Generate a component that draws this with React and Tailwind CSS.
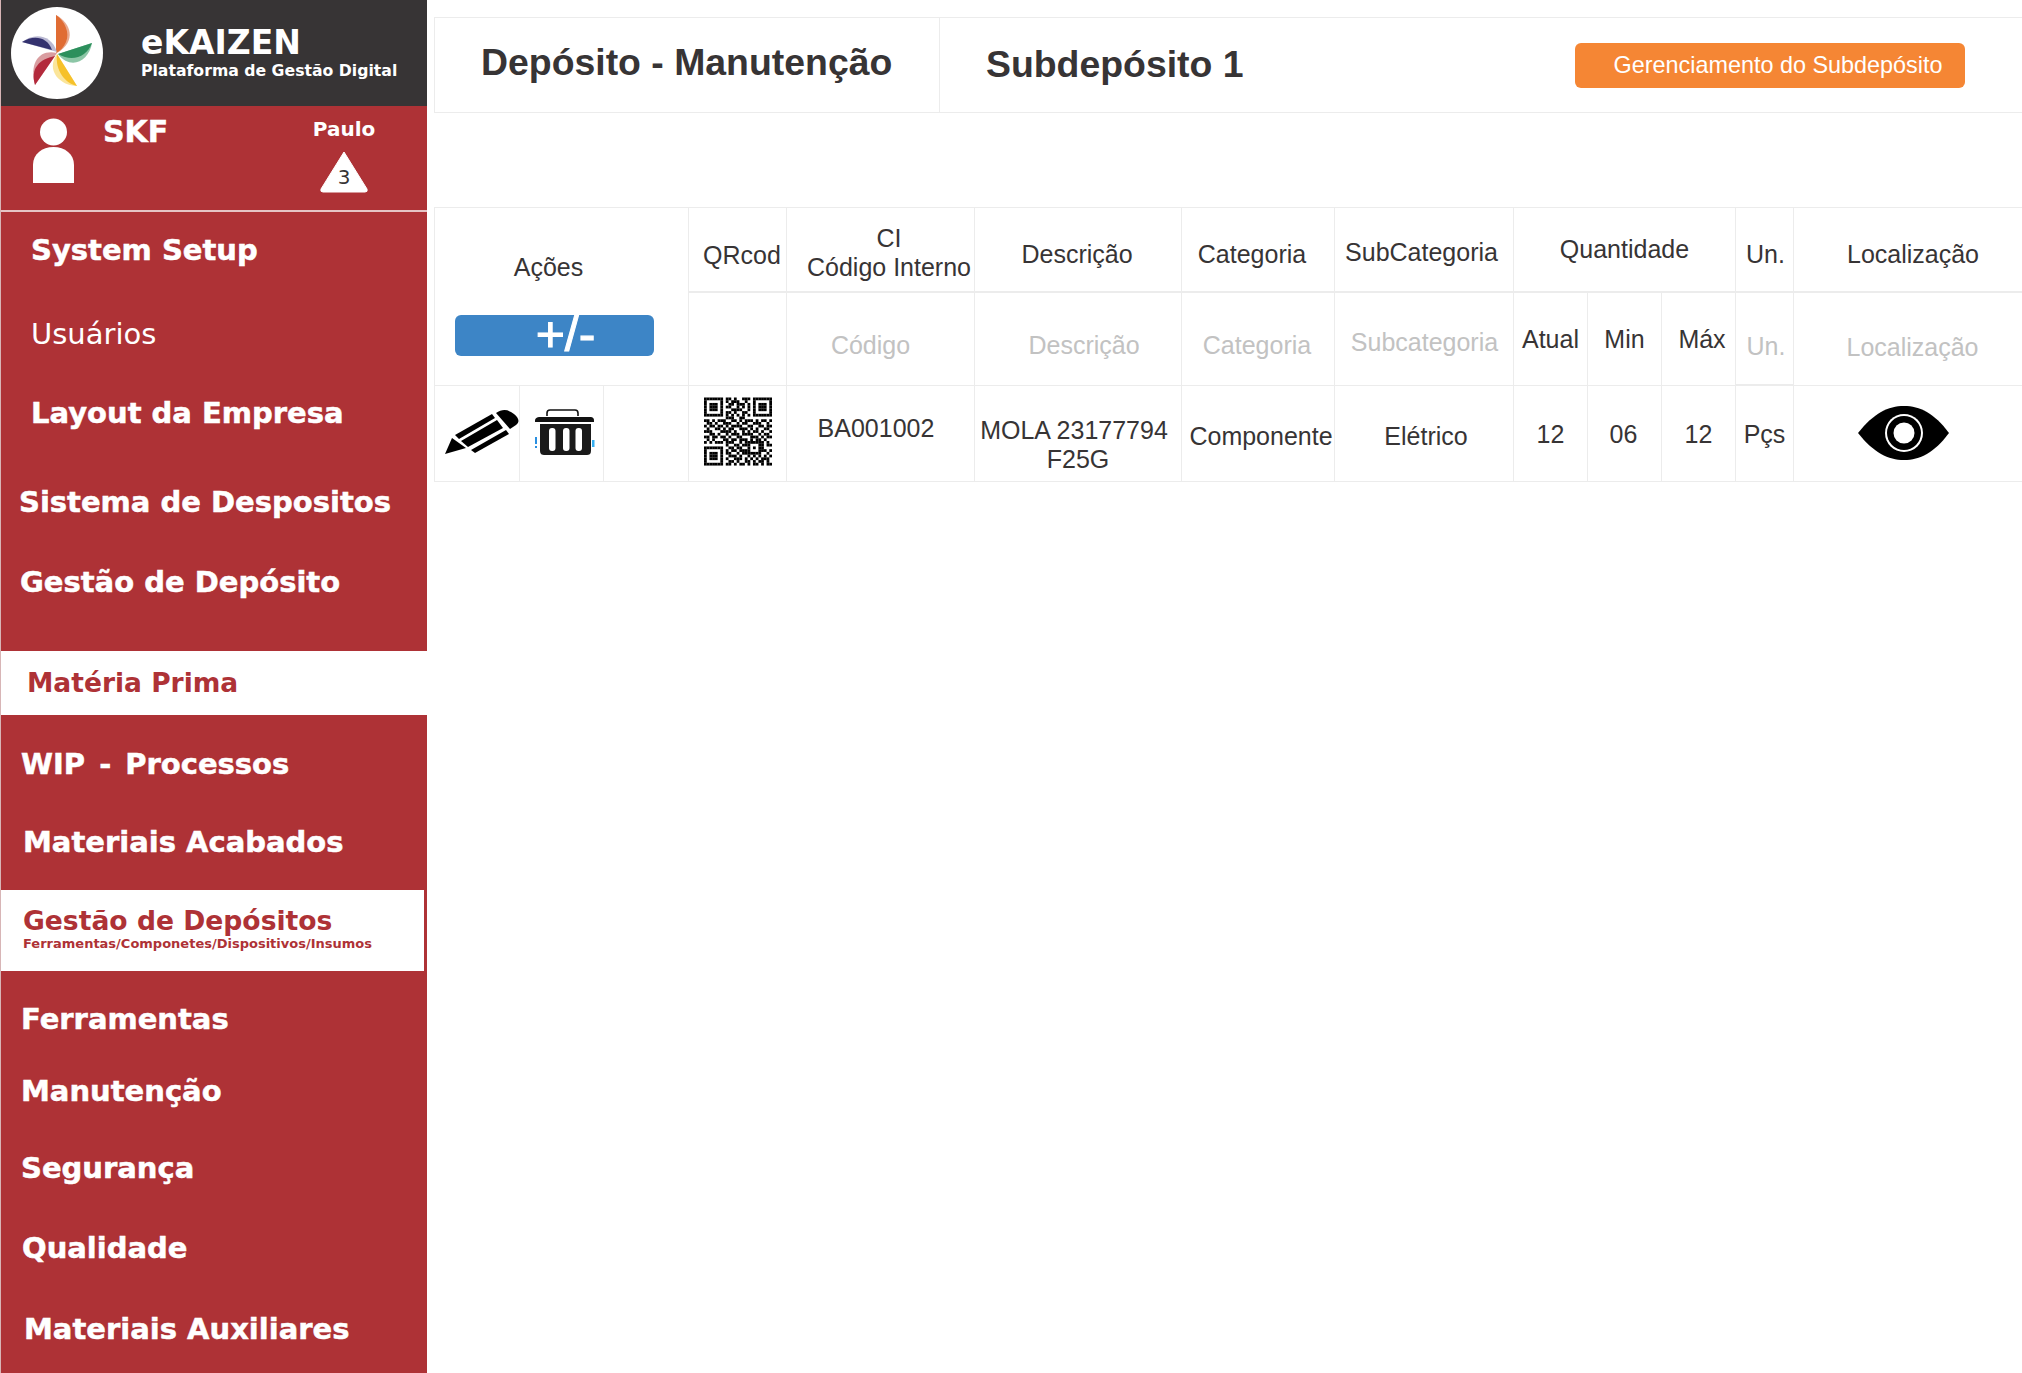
const QR = [
"1111111011010011101111111",
"1000001010111001001000001",
"1011101001101110101011101",
"1011101011001010101011101",
"1011101000111100101011101",
"1000001011010011001000001",
"1111111010101010101111111",
"0000000011100110000000000",
"1101011100110101110101101",
"0110100111001011001110010",
"1011011010111100110011011",
"0100110101100111010100110",
"1110001111010010101101001",
"0011010010111011110010110",
"1101101101001100011101011",
"0101000110110111010110100",
"1010111011100101111111010",
"0000000010011011100011011",
"1111111001101100101011000",
"1000001010110111100011101",
"1011101011001011111110010",
"1011101001110100101010101",
"1011101010011101010101110",
"1000001001101001101011010",
"1111111011010110101101011",
];

function QrCode() {
  const rects = [];
  QR.forEach((row, y) => {
    [...row].forEach((c, x) => {
      if (c === "1") rects.push(<rect key={x + "-" + y} x={x} y={y} width="1.02" height="1.02" />);
    });
  });
  return (
    <svg viewBox="0 0 25 25" className="w-[68px] h-[69px]" fill="#000">
      {rects}
    </svg>
  );
}

function Logo() {
  return (
    <svg viewBox="0 0 105 105" className="w-[105px] h-[105px] shrink-0 ml-[5px]">
      <circle cx="52" cy="52" r="46" fill="#fff" />
      {/* orange */}
      <path d="M51 14 C66 22 72 40 52 52 Z" fill="#e8a98f" />
      <path d="M51 14 C60 20 65 32 61 41 C59 46 55 50 51 52 Z" fill="#e06c33" />
      {/* green */}
      <path d="M87 42 C84 60 66 70 53 53 Z" fill="#8cc6a6" />
      <path d="M87 42 C82 55 68 62 53 53 Z" fill="#2c8f5c" />
      {/* yellow */}
      <path d="M52 53 L72 85 C56 85 40 70 52 53 Z" fill="#fbe59a" />
      <path d="M52 53 L72 85 C60 82 50 70 52 53 Z" fill="#f6c12a" />
      {/* red */}
      <path d="M30 84 C24 62 34 48 52 52 Z" fill="#d99da0" />
      <path d="M30 84 C25 68 34 58 50 55 Z" fill="#b32a3c" />
      {/* blue */}
      <path d="M17 41 C28 32 46 32 52 51 Z" fill="#b9b8d2" />
      <path d="M17 41 C28 34 42 35 47 49 Z" fill="#34326f" />
    </svg>
  );
}

function Pencil() {
  return (
    <svg viewBox="0 0 76 50" className="w-[76px] h-[50px] shrink-0">
      <path d="M1 46 L8 30 L22 40 Z" fill="#000" />
      <path d="M11 27 L48 6 L51 10 L15 31 Z" fill="#000" />
      <path d="M17 33 L53 12 L59 20 L24 39 Z" fill="#000" />
      <path d="M27 42 L62 22 L65 26 L31 45 Z" fill="#000" />
      <path d="M52 5 C58 1 64 1 70 6 C75 10 76 14 72 17 L66 21 Z" fill="#000" />
    </svg>
  );
}

function Trash() {
  return (
    <svg viewBox="0 0 64 50" className="w-[64px] h-[50px] shrink-0">
      <path d="M15 8 V5 C15 3 16 2 18 2 H43 C45 2 46 3 46 5 V8" fill="none" stroke="#111" strokeWidth="1.6" />
      <path d="M3 13 C3 10 5 9 8 9 H58 C61 9 62 10 62 13 V14 H3 Z" fill="#111" />
      <path d="M8 16 H59 V43 C59 46 57 47 55 47 H12 C10 47 8 46 8 43 Z" fill="#1a1a1a" />
      <rect x="17" y="20" width="6.5" height="23" rx="3" fill="#fff" />
      <rect x="31" y="20" width="6.5" height="23" rx="3" fill="#fff" />
      <rect x="43.5" y="20" width="6.5" height="23" rx="3" fill="#fff" />
      <rect x="3" y="29" width="2" height="7" fill="#2a8fe0" />
      <rect x="3" y="38" width="2" height="2" fill="#2a8fe0" />
      <rect x="60" y="32" width="2.5" height="7" fill="#35aef0" />
    </svg>
  );
}

function Eye() {
  return (
    <svg viewBox="0 0 92 56" className="w-[92px] h-[56px]">
      <path d="M0 28 C16 8 30 1 46 1 C62 1 76 8 91 28 C76 48 62 55 46 55 C30 55 16 48 0 28 Z" fill="#000" />
      <circle cx="46" cy="28" r="19" fill="#fff" />
      <circle cx="46" cy="28" r="17" fill="#000" />
      <circle cx="46" cy="28" r="10.5" fill="#fff" />
    </svg>
  );
}

const menuText = "font-['DejaVu_Sans',sans-serif] font-bold text-[29px] leading-none text-white [-webkit-text-stroke:0.5px_white]";

export default function App() {
  return (
    <div className="flex min-h-[1373px] bg-white font-['Liberation_Sans',Arial,sans-serif] text-[#373435]">
      <aside className="w-[427px] shrink-0 h-[1373px] overflow-hidden bg-[#ae3236] flex flex-col font-['DejaVu_Sans',sans-serif] border-l border-[#d8b5b6]">
        <div className="h-[106px] bg-[#373435] flex items-center -ml-px">
          <Logo />
          <div className="ml-[31px] text-white font-bold">
            <div className="text-[33px] leading-[36px]">eKAIZEN</div>
            <div className="text-[15.7px] leading-[20px]">Plataforma de Gestão Digital</div>
          </div>
        </div>
        <div className="h-[106px] flex border-b-2 border-[#e6c4c5]">
          <div className="w-[32px]" />
          <svg viewBox="0 0 41 65" className="w-[41px] h-[65px] mt-[12px] shrink-0">
            <circle cx="20.5" cy="14" r="13.5" fill="#fff" />
            <path d="M0 65 V47 C0 36 9 29 20.5 29 C32 29 41 36 41 47 V65 Z" fill="#fff" />
          </svg>
          <div className="ml-[29px] mt-[8px] text-[30px] leading-[36px] font-bold text-white w-[211px] [-webkit-text-stroke:0.5px_white]">SKF</div>
          <div className="flex flex-col items-center w-[60px] mt-[10px]">
            <div className="text-[20px] leading-[26px] font-bold text-white">Paulo</div>
            <div className="relative w-[48px] h-[42px] mt-[9px] shrink-0">
              <svg viewBox="0 0 48 42" className="w-[48px] h-[42px]">
                <path d="M24 1 L47 38 Q48 41 45 41 H3 Q0 41 1 38 Z" fill="#fff" stroke="#fff" strokeLinejoin="round" />
              </svg>
              <span className="absolute inset-x-0 top-[13px] text-center text-[20px] leading-[26px] font-normal text-[#373435]">3</span>
            </div>
          </div>
        </div>

        <div className={`h-[76px] flex items-center pl-[30px] ${menuText}`}>System Setup</div>
        <div className="h-[92px] flex items-center pl-[30px] text-[29px] leading-none text-white">Usuários</div>
        <div className={`h-[66px] flex items-center pl-[30px] ${menuText}`}>Layout da Empresa</div>
        <div className={`h-[112px] flex items-center pl-[18px] ${menuText}`}>Sistema de Despositos</div>
        <div className={`h-[48px] flex items-center pl-[19px] ${menuText}`}>Gestão de Depósito</div>
        <div className="h-[45px]" />
        <div className="h-[64px] flex items-center pl-[26px] bg-white font-bold text-[26.5px] leading-none text-[#ae3236]">Matéria Prima</div>
        <div className={`h-[98px] flex items-center pl-[20px] [word-spacing:4px] ${menuText}`}>WIP - Processos</div>
        <div className={`h-[58px] flex items-center pl-[22px] ${menuText}`}>Materiais Acabados</div>
        <div className="h-[19px]" />
        <div className="h-[81px] mr-[3px] bg-white pl-[22px] pt-[17px] text-[#ae3236] font-bold">
          <div className="text-[26.6px] leading-[28px]">Gestão de Depósitos</div>
          <div className="text-[13px] leading-[16px] mt-px">Ferramentas/Componetes/Dispositivos/Insumos</div>
        </div>
        <div className={`h-[96px] flex items-center pl-[20px] ${menuText}`}>Ferramentas</div>
        <div className={`h-[48px] flex items-center pl-[20px] ${menuText}`}>Manutenção</div>
        <div className={`h-[106px] flex items-center pl-[20px] ${menuText}`}>Segurança</div>
        <div className={`h-[52px] flex items-center pl-[21px] pt-[2px] ${menuText}`}>Qualidade</div>
        <div className={`h-[100px] flex items-center pl-[23px] pt-[12px] ${menuText}`}>Materiais Auxiliares</div>
      </aside>

      <main className="flex-1 ml-[7px] pt-[17px]">
        <header className="h-[96px] flex items-center border border-[#ececec] border-r-0">
          <div className="w-[505px] h-full shrink-0 flex items-center pl-[46px] border-r border-[#ececec] pb-[4px]">
            <h1 className="text-[37.4px] leading-none font-bold">Depósito - Manutenção</h1>
          </div>
          <h2 className="ml-[46px] text-[37.4px] leading-none font-bold flex-1">Subdepósito 1</h2>
          <button className="w-[390px] h-[45px] mt-px mr-[57px] rounded-[6px] bg-[#f58634] text-white text-[23.4px] leading-none pl-[16px]">
            Gerenciamento do Subdepósito
          </button>
        </header>

        <div className="mt-[94px] grid grid-cols-[85px_84px_85px_98px_188px_207px_153px_179px_74px_74px_74px_58px_1fr] grid-rows-[85px_93px_95px] border-t border-b border-l border-[#ececec] text-[25px] leading-[29px]">
          {/* row 1-2: Ações */}
          <div className="col-span-3 row-span-2 border-r border-b border-[#ececec] flex flex-col">
            <div className="pt-[45px] text-center pr-[26px]">Ações</div>
            <div className="mt-[33px] ml-[20px] w-[199px] h-[41px] rounded-[6px] bg-[#3d85c6] text-white text-[50px] leading-[38px] text-center pl-[22px] [-webkit-text-stroke:1px_white]">+/-</div>
          </div>
          <div className="border-r border-b-2 border-[#ececec] flex items-center justify-center pt-[12px] pl-[9px]">QRcod</div>
          <div className="border-r border-b-2 border-[#ececec] flex flex-col items-center justify-center pt-[6px] pl-[17px]"><span>CI</span><span>Código Interno</span></div>
          <div className="border-r border-b-2 border-[#ececec] flex items-center justify-center pt-[10px] pr-[2px]">Descrição</div>
          <div className="border-r border-b-2 border-[#ececec] flex items-center justify-center pt-[10px] pr-[12px]">Categoria</div>
          <div className="border-r border-b-2 border-[#ececec] flex items-center justify-center pt-[6px] pr-[5px]">SubCategoria</div>
          <div className="col-span-3 border-r border-b-2 border-[#ececec] flex items-center justify-center">Quantidade</div>
          <div className="border-r border-b-2 border-[#ececec] flex items-center justify-center pt-[10px] pl-[2px]">Un.</div>
          <div className="border-b-2 border-[#ececec] flex items-center justify-center pt-[10px] pl-[10px]">Localização</div>

          {/* row 2 */}
          <div className="border-r border-b border-[#ececec]" />
          <div className="border-r border-b border-[#ececec] flex items-center justify-center pt-[12px] pr-[20px] text-[#c2c2c2]">Código</div>
          <div className="border-r border-b border-[#ececec] flex items-center justify-center pt-[12px] pl-[12px] text-[#c2c2c2]">Descrição</div>
          <div className="border-r border-b border-[#ececec] flex items-center justify-center pt-[12px] pr-[2px] text-[#c2c2c2]">Categoria</div>
          <div className="border-r border-b border-[#ececec] flex items-center justify-center pt-[6px] pl-px text-[#c2c2c2]">Subcategoria</div>
          <div className="border-r border-b border-[#ececec] flex items-center justify-center">Atual</div>
          <div className="border-r border-b border-[#ececec] flex items-center justify-center">Min</div>
          <div className="border-r border-b border-[#ececec] flex items-center justify-center pl-[7px]">Máx</div>
          <div className="border-r border-b-2 border-[#ececec] flex items-center justify-center pt-[16px] pl-[3px] text-[#c2c2c2]">Un.</div>
          <div className="border-b border-[#ececec] flex items-center justify-center pt-[16px] pl-[9px] text-[#c2c2c2]">Localização</div>

          {/* row 3 */}
          <div className="border-r border-[#ececec] flex items-center pl-[9px] pb-[2px]"><Pencil /></div>
          <div className="border-r border-[#ececec] flex items-center pl-[12px] pb-[2px]"><Trash /></div>
          <div className="border-r border-[#ececec]" />
          <div className="border-r border-[#ececec] flex items-center justify-center pb-[4px]"><QrCode /></div>
          <div className="border-r border-[#ececec] flex items-center justify-center pb-[10px] pr-[9px]">BA001002</div>
          <div className="border-r border-[#ececec] flex flex-col items-center justify-center pt-[22px]"><span className="pr-[8px]">MOLA 23177794</span><span>F25G</span></div>
          <div className="border-r border-[#ececec] flex items-center justify-center pl-[6px] pt-[5px]">Componente</div>
          <div className="border-r border-[#ececec] flex items-center justify-center pl-[4px] pt-[5px]">Elétrico</div>
          <div className="border-r border-[#ececec] flex items-center justify-center pt-[2px]">12</div>
          <div className="border-r border-[#ececec] flex items-center justify-center pt-[2px] pr-[2px]">06</div>
          <div className="border-r border-[#ececec] flex items-center justify-center pt-[2px]">12</div>
          <div className="border-r border-[#ececec] flex items-center justify-center pt-[2px]">Pçs</div>
          <div className="flex items-center justify-center pr-[9px] pb-[2px]"><Eye /></div>
        </div>
      </main>
    </div>
  );
}
